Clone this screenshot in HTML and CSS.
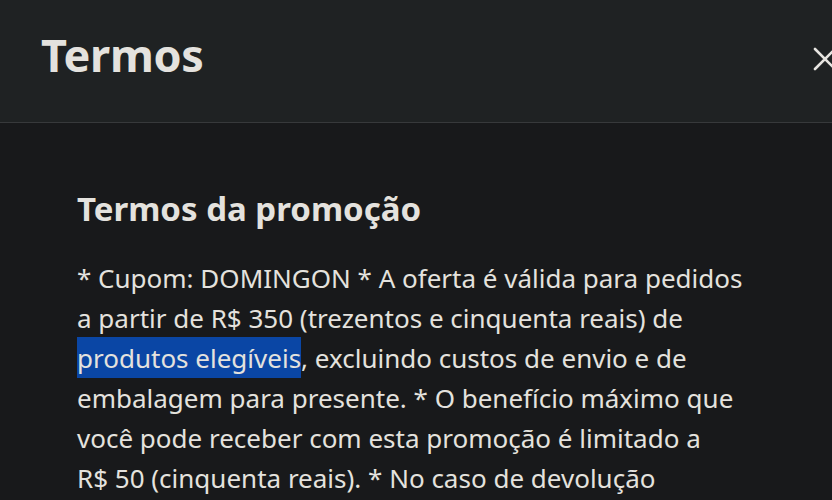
FILE: index.html
```html
<html>
    <head>
        <meta charset="UTF-8">
        <link rel="stylesheet" href="styles.css">
    </head>
    <body>
        <div id="modal">
            <div class="cabecalho">
                <h1 class="titulo">Termos</h1>
                <button class="fechar" aria-label="Fechar">
                    <svg width="26" height="26" viewBox="0 0 26 26">
                        <path d="M3 3 L23 23 M23 3 L3 23" stroke="#e6e4e0" stroke-width="2.6" stroke-linecap="round"/>
                    </svg>
                </button>
            </div>
            <div class="conteudo">
                <h2 class="subtitulo">Termos da promoção</h2>
                <p class="texto">* Cupom: DOMINGON * A oferta é válida para pedidos a partir de R$&nbsp;350 (trezentos e cinquenta reais) de <span class="selecionado">produtos elegíveis</span>, excluindo custos de envio e de embalagem para presente. * O benefício máximo que você pode receber com esta promoção é limitado a R$&nbsp;50 (cinquenta reais). * No caso de devolução de&nbsp;produtos, o valor do desconto será descontado do reembolso.</p>
            </div>
        </div>
    </body>
</html>
```

FILE: styles.css
```css
html, body {
    margin: 0;
    height: 100%;
    overflow: hidden;
    background-color: #18191b;
}
#modal {
    width: 880px;
    font-family: "Noto Sans", sans-serif;
    color: #e4e2de;
}
.cabecalho {
    display: flex;
    align-items: center;
    justify-content: space-between;
    height: 123px;
    padding: 0 42px 0 41px;
    background-color: #1f2223;
    border-bottom: 1px solid #37393b;
    box-sizing: border-box;
}
.titulo {
    margin: 0 0 14px;
    font-size: 45px;
    font-weight: 700;
    letter-spacing: -0.3px;
}
.fechar {
    padding: 0;
    border: none;
    background: none;
    display: flex;
    margin-top: -4px;
}
.conteudo {
    padding: 66px 0 0 77px;
    width: 672px;
}
.subtitulo {
    margin: 0 0 29px;
    font-size: 33px;
    font-weight: 700;
    line-height: 40px;
}
.texto {
    margin: 0;
    font-size: 26px;
    line-height: 40px;
}
.selecionado {
    padding: 3px 0 2px;
    background-color: #0a46a5;
}
```
